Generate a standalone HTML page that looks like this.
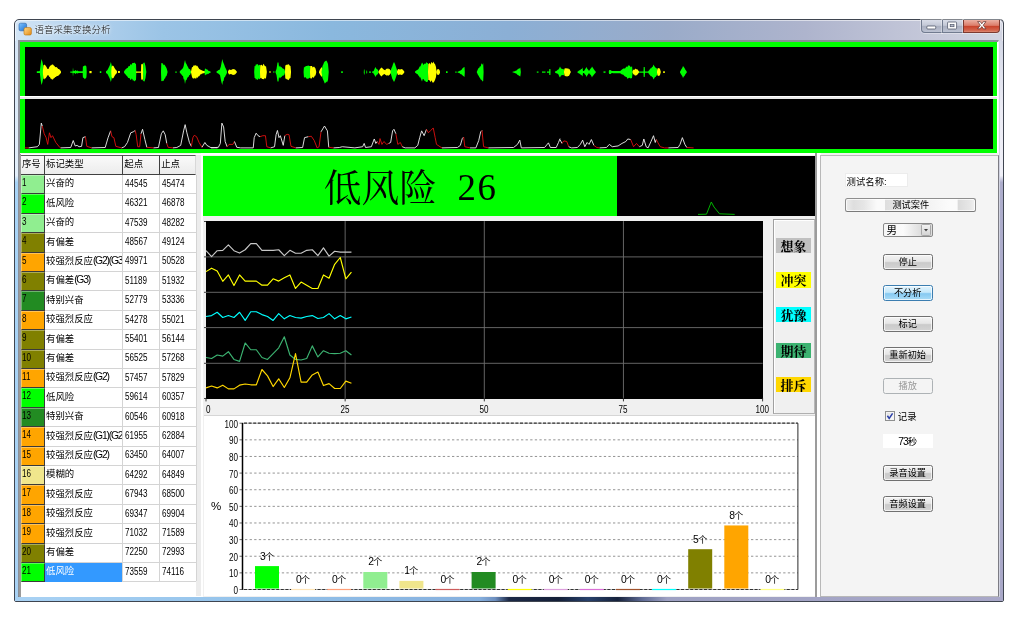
<!DOCTYPE html><html><head><meta charset="utf-8"><title>语音采集变换分析</title><style>
html,body{margin:0;padding:0;}
body{width:1033px;height:623px;background:#fff;position:relative;overflow:hidden;
 font-family:"Liberation Sans","Noto Sans CJK SC",sans-serif;font-size:9px;color:#000;}
div,span{box-sizing:border-box;}
.abs{position:absolute;}
#win{position:absolute;left:14.4px;top:19.1px;width:989.8px;height:582.7px;border:1px solid #3f4550;border-radius:5px 4px 2px 2px;
 background:linear-gradient(to right,#d3e5f6 0%,#b5d3ee 6%,#9bc4e6 15%,#8ab8de 32%,#8bafd5 50%,#9aabc9 66%,#aeb4cd 80%,#c6c9da 93%,#d2d4e2 100%);overflow:hidden;}
#winhl{position:absolute;left:0;top:0;right:0;bottom:0;border:1px solid rgba(255,255,255,.55);border-radius:5px 5px 1px 1px;}
#botframe{position:absolute;left:0px;top:577px;width:988px;height:5px;background:linear-gradient(to right,#a9d2f4 0%,#93c2ea 25%,#86b0de 47%,#6d8fbf 48.6%,#1c2946 50%,#141f38 55%,#27406b 58%,#16223c 61%,#5f6b95 63.5%,#9ea1c3 66%,#a9a8c8 100%);}
#leftframe{position:absolute;left:0;top:21px;width:4px;height:561px;background:linear-gradient(to bottom,#d6e6f6 0%,#e4f0fb 24%,#a8d4f7 25.2%,#a9d2f4 100%);}
#rightframe{position:absolute;left:984.6px;top:21px;width:5px;height:561px;background:linear-gradient(to bottom,#d4d8e6 0%,#ececf5 12%,#f0f0f8 24%,#adadcc 25.2%,#a9a8c8 100%);}
#title{position:absolute;left:34.4px;top:24.4px;font-size:9.5px;line-height:12px;color:#111;font-weight:300;white-space:nowrap;text-shadow:0 0 3px #fff,0 0 5px #fff;}
#client{position:absolute;left:18.2px;top:40px;width:981.2px;height:557px;background:#f0f0f0;border:2px solid #8a8f99;border-right:1.6px solid #f4f4f8;border-bottom:1.4px solid #666a74;}
.cap{position:absolute;top:20px;height:13.4px;border:1px solid #717b8f;border-top:none;box-shadow:0 0 0 1px rgba(255,255,255,.35);}


.t{position:absolute;white-space:nowrap;line-height:11px;font-size:9.4px;}
.n,.nr,.nc{font-size:10.3px;transform:scaleX(.786);transform-origin:left center;}
.nr{transform-origin:right center;}
.nc{transform-origin:center center;}
.ns{font-size:10.3px;letter-spacing:-0.95px;}
.nl{font-size:10.3px;letter-spacing:-1.2px;}
.hd{position:absolute;top:154.8px;height:20.2px;background:linear-gradient(#fafafa,#ececec);border-right:1px solid #404040;border-bottom:1px solid #404040;border-top:1px solid #5a5a5a;}
.rh{position:absolute;left:21px;width:24px;border-right:1.2px solid #3a3a3a;border-bottom:1.2px solid #3a3a3a;border-top:1px solid rgba(255,255,255,.35);border-left:1px solid rgba(255,255,255,.35);}
.btn{position:absolute;left:882.6px;width:50.2px;height:16.2px;border:1px solid #707070;border-radius:2.5px;
 background:linear-gradient(#f3f3f3 0%,#e6e6e6 45%,#cacaca 55%,#d4d4d4 100%);box-shadow:inset 0 0 0 1px rgba(255,255,255,.7);
 text-align:center;font-size:9.2px;line-height:14px;white-space:nowrap;}
.lg{position:absolute;left:776.2px;width:34.8px;height:15.2px;text-align:center;font-family:"Liberation Serif","Noto Serif CJK SC",serif;font-weight:bold;font-size:13px;line-height:18px;white-space:nowrap;}
</style></head><body><div id="root" style="position:absolute;left:0;top:0;width:1033px;height:623px;will-change:transform;">
<div id="win"><div id="winhl"></div><div id="leftframe"></div><div id="rightframe"></div><div id="botframe"></div></div>
<svg class="abs" style="left:18px;top:22px" width="15" height="15" viewBox="0 0 15 15"><defs><linearGradient id="ib" x1="0" y1="0" x2="1" y2="1"><stop offset="0" stop-color="#7fc4ff"/><stop offset="1" stop-color="#1d6fd0"/></linearGradient><linearGradient id="io" x1="0" y1="0" x2="1" y2="1"><stop offset="0" stop-color="#ffd98a"/><stop offset="1" stop-color="#e38a12"/></linearGradient></defs><rect x="1" y="1.2" width="7.6" height="7.6" rx="1.6" fill="url(#ib)" stroke="#2a62a8" stroke-width=".6"/><rect x="6" y="5.6" width="7.4" height="7.4" rx="1.6" fill="url(#io)" stroke="#b8700c" stroke-width=".6"/></svg>
<div id="title">语音采集变换分析</div>
<div class="cap" style="left:920.5px;width:21px;border-radius:0 0 0 4px;border-right:none;background:linear-gradient(#d9dde8 0%,#c3c8d6 45%,#a9afc0 50%,#bcc2d2 100%);"></div>
<div class="cap" style="left:941.5px;width:21px;border-right:none;background:linear-gradient(#d9dde8 0%,#c3c8d6 45%,#a9afc0 50%,#bcc2d2 100%);"></div>
<div class="cap" style="left:962.5px;width:37px;border-radius:0 0 4px 0;border-color:#7d3a30;background:linear-gradient(#ebb0a3 0%,#dc7d6a 45%,#c8432b 52%,#d3634c 85%,#dd8a74 100%);"></div>
<svg class="abs" style="left:920px;top:18.1px" width="80" height="15" viewBox="0 0 80 15"><rect x="6.8" y="8" width="9" height="3" rx="1" fill="#fff" stroke="#50586a" stroke-width=".8"/><rect x="27.6" y="4" width="9" height="7" rx=".8" fill="#fff" stroke="#50586a" stroke-width=".8"/><rect x="30.2" y="6.5" width="3.8" height="2.2" fill="#b8bdcc" stroke="#50586a" stroke-width=".7"/><path d="M57.6 3.6 L60.2 3.6 L61.8 5.8 L63.4 3.6 L66 3.6 L63.2 7.2 L66 10.8 L63.4 10.8 L61.8 8.6 L60.2 10.8 L57.6 10.8 L60.4 7.2 Z" fill="#fff" stroke="#5a2a26" stroke-width=".7"/></svg>
<div id="client"></div>
<div class="abs" style="left:20px;top:42px;width:977px;height:54.2px;background:#00ff00;"></div>
<div class="abs" style="left:20px;top:98.8px;width:977px;height:54.4px;background:#00ff00;"></div>
<div class="abs" style="left:19.5px;top:96.1px;width:978.5px;height:2.8px;background:#e8e8e8;border-top:1px solid #fff;"></div>
<div class="abs" style="left:24.8px;top:46.8px;width:968.2px;height:49.4px;background:#000;"></div>
<div class="abs" style="left:24.8px;top:98.9px;width:968.2px;height:50.1px;background:#000;"></div>
<div class="abs" style="left:997px;top:42px;width:1.4px;height:111px;background:#fff;"></div>
<svg class="abs" style="left:0;top:0" width="1033" height="160" viewBox="0 0 1033 160">
<polygon fill="#00ff00" points="36.8,71.3 37.55,71.25 38.3,71.2 39.05,71.15 39.8,71.1 40.2,68.1 40.8,63.1 41.5,59.1 42.2,61.1 42.8,63.6 43.4,67.1 44,71.6 44,72.6 43.4,77.1 42.8,80.6 42.2,83.1 41.5,85.1 40.8,81.1 40.2,76.1 39.8,73.1 39.05,73.05 38.3,73 37.55,72.95 36.8,72.9"/>
<polygon fill="#ffff00" points="42.9,71.1 43.4,65.6 44.3,64.6 44.9,65.01 45.5,65.6 46.5,67.1 47.5,68.9 48.5,68.9 49.3,67.1 49.9,66.24 50.5,65.6 51.25,65.36 52,64.6 53,64.6 53.75,65.39 54.5,66.1 55.25,67.32 56,67.1 56.75,67.27 57.5,68.1 58.25,69.01 59,69.1 60,70.1 61,71.4 61,72.8 60,74.1 59,75.1 58.25,75.63 57.5,76.1 56.75,75.88 56,77.1 55.25,77.11 54.5,78.1 53.75,78.24 53,79.6 52,79.6 51.25,78.77 50.5,78.6 49.9,76.79 49.3,77.1 48.5,75.3 47.5,75.3 46.5,77.1 45.5,78.6 44.9,78.31 44.3,79.6 43.4,78.6 42.9,73.1"/>
<polygon fill="#00ff00" points="70.3,71.4 71.07,71.4 71.83,71.4 72.6,71.4 73,67.6 73.5,71.1 74.5,71.1 75.5,70.1 76.5,71.1 77.5,70.6 78.5,71.3 79.2,71.3 79.9,71.3 80.6,71.3 81.3,71.3 82,71.3 82.7,71.3 82.9,66.6 84,66.1 84.75,65.47 85.5,65.6 86.4,66.6 86.7,71.6 86.7,72.6 86.4,77.6 85.5,78.6 84.75,79.18 84,78.1 82.9,77.6 82.7,72.9 82,72.9 81.3,72.9 80.6,72.9 79.9,72.9 79.2,72.9 78.5,72.9 77.5,73.6 76.5,73.1 75.5,74.1 74.5,73.1 73.5,73.1 73,76.6 72.6,72.8 71.83,72.8 71.07,72.8 70.3,72.8"/>
<polygon fill="#ffff00" points="89.4,71 91.6,71 91.6,73.2 89.4,73.2"/>
<polygon fill="#00ff00" points="99.8,71.2 101.3,71.2 101.3,73 99.8,73"/>
<polygon fill="#00ff00" points="106,71.3 106.75,70.7 107.5,70.1 108.5,68.1 109.5,66.1 110.3,64.1 110.8,62.1 111.4,64.1 112,67.1 112.6,71.6 112.6,72.6 112,77.1 111.4,80.1 110.8,82.1 110.3,80.1 109.5,78.1 108.5,76.1 107.5,74.1 106.75,73.5 106,72.9"/>
<polygon fill="#ffff00" points="111.3,71.6 111.6,67.1 112.5,65.6 113.5,66.1 114.5,68.1 115.5,69.6 116.5,70.6 117,71.6 117,72.6 116.5,73.6 115.5,74.6 114.5,76.1 113.5,78.1 112.5,78.6 111.6,77.1 111.3,72.6"/>
<polygon fill="#ffff00" points="118,71.1 119.9,71.1 119.9,73.1 118,73.1"/>
<polygon fill="#00ff00" points="124,71.6 125,70.1 125.67,69.26 126.33,68.86 127,68.1 127.67,68.05 128.33,66.58 129,66.1 129.67,66.13 130.33,64.53 131,64.1 131.67,65.11 132.33,62.93 133,63.1 133.75,62.93 134.5,62.6 135.25,63.55 136,64.1 136.3,71.4 136.3,72.8 136,80.1 135.25,80.52 134.5,81.6 133.75,80.1 133,81.1 132.33,78.96 131.67,78.62 131,80.1 130.33,79.75 129.67,78.35 129,78.1 128.33,78.12 127.67,76.91 127,76.1 126.33,75.44 125.67,74.62 125,74.1 124,72.6"/>
<polygon fill="#ffff00" points="136,71.4 136.71,71.4 137.43,71.4 138.14,71.4 138.86,71.4 139.57,71.4 140.29,71.4 141,71.4 141.2,64.1 142.1,64.51 143,63.6 143.2,71.6 143.2,72.6 143,80.6 142.1,79.05 141.2,80.1 141,72.8 140.29,72.8 139.57,72.8 138.86,72.8 138.14,72.8 137.43,72.8 136.71,72.8 136,72.8"/>
<polygon fill="#00ff00" points="143,71.6 143.2,63.1 144.5,62.6 145.5,66.1 146,70.1 146.3,71.6 146.3,72.6 146,74.1 145.5,78.1 144.5,81.6 143.2,81.1 143,72.6"/>
<polygon fill="#00ff00" points="161,71.6 161.3,63.1 162.15,63.27 163,63.6 163.67,65.16 164.33,64.38 165,65.6 165.75,66.69 166.5,68.1 167.5,71.6 167.5,72.6 166.5,76.1 165.75,76.42 165,78.6 164.33,78.67 163.67,80.92 163,80.6 162.15,81.15 161.3,81.1 161,72.6"/>
<polygon fill="#00ff00" points="175.3,71.4 176.7,71.4 176.7,72.8 175.3,72.8"/>
<polygon fill="#00ff00" points="179.7,71.6 180.35,70.85 181,70.1 181.67,69.45 182.33,68.67 183,68.1 183.67,65.97 184.33,62.77 185,60.1 185.75,62.98 186.5,64.1 187.25,65.74 188,67.1 188.67,68.5 189.33,69.16 190,69.1 191,71.6 191,72.6 190,75.1 189.33,75.06 188.67,76.72 188,77.1 187.25,78.02 186.5,80.1 185.75,80.26 185,84.1 184.33,79.4 183.67,79.28 183,76.1 182.33,75.77 181.67,74.7 181,74.1 180.35,73.35 179.7,72.6"/>
<polygon fill="#ffff00" points="191,71.6 192,67.1 192.67,67.3 193.33,65.93 194,65.1 194.67,65.71 195.33,65.52 196,65.1 196.67,66.32 197.33,65.77 198,67.1 198.67,68.06 199.33,69.22 200,69.1 200.67,70.01 201.33,70.01 202,70.6 202.75,70.77 203.5,70.95 204.25,71.12 205,71.3 205.2,71.6 205.2,72.6 205,72.9 204.25,73.07 203.5,73.25 202.75,73.42 202,73.6 201.33,74.17 200.67,74.36 200,75.1 199.33,76.22 198.67,76.35 198,77.1 197.33,78.12 196.67,77.3 196,79.1 195.33,78.31 194.67,77.79 194,79.1 193.33,78.13 192.67,78.33 192,77.1 191,72.6"/>
<polygon fill="#00ff00" points="204.5,71.5 205,68.6 205.67,68.69 206.33,69.19 207,69.6 207.67,69.76 208.33,70.74 209,70.9 209.85,71.3 210.7,71.7 210.7,72.5 209.85,72.9 209,73.3 208.33,73.95 207.67,73.73 207,74.6 206.33,74.35 205.67,74.77 205,75.6 204.5,72.7"/>
<polygon fill="#00ff00" points="216.5,71.6 217.25,71.1 218,70.6 218.67,70.06 219.33,69.94 220,69.1 220.77,66.82 221.53,63.06 222.3,59.1 222.9,61.58 223.5,63.1 224.25,64.69 225,67.1 225.75,68.38 226.5,70.1 227,71.6 227,72.6 226.5,74.1 225.75,75.19 225,77.1 224.25,77.55 223.5,81.1 222.9,81.29 222.3,85.1 221.53,82.61 220.77,79.09 220,75.1 219.33,74.62 218.67,73.68 218,73.6 217.25,73.1 216.5,72.6"/>
<polygon fill="#ffff00" points="228,71.6 229,69.6 231,70.1 233,69.1 235,69.6 236.8,71.6 236.8,72.6 235,74.6 233,75.1 231,74.1 229,74.6 228,72.6"/>
<polygon fill="#00ff00" points="254.2,71.6 254.6,66.1 255.3,66.34 256,64.1 256.67,64.75 257.33,64.1 258,64.6 258.67,65.66 259.33,64.8 260,65.1 260.2,71.6 260.2,72.6 260,79.1 259.33,79.21 258.67,78.35 258,79.6 257.33,80.03 256.67,78.87 256,80.1 255.3,78.09 254.6,78.1 254.2,72.6"/>
<polygon fill="#ffff00" points="260,71.6 260.2,65.6 261.1,64.72 262,65.1 262.67,66.19 263.33,63.8 264,64.6 264.67,65.71 265.33,66.38 266,66.1 266.8,71.6 266.8,72.6 266,78.1 265.33,78.85 264.67,77.69 264,79.6 263.33,78.94 262.67,79.11 262,79.1 261.1,77.86 260.2,78.6 260,72.6"/>
<polygon fill="#ffff00" points="269,71.6 271,71.6 271,72.6 269,72.6"/>
<polygon fill="#00ff00" points="273,71.6 274.5,71.6 274.5,72.6 273,72.6"/>
<polygon fill="#00ff00" points="275.5,71.6 276.5,69.1 277.5,62.6 278.5,62.6 279,67.1 280,65.6 280.75,67.17 281.5,67.1 282.25,68.15 283,68.6 283.75,68.92 284.5,69.6 285,71.6 285,72.6 284.5,74.6 283.75,75.42 283,75.6 282.25,75.98 281.5,77.1 280.75,77.29 280,78.6 279,77.1 278.5,81.6 277.5,81.6 276.5,75.1 275.5,72.6"/>
<polygon fill="#ffff00" points="285,71.6 285.3,65.6 286.15,65.07 287,64.6 287.67,64.73 288.33,64.25 289,64.6 289.75,65.87 290.5,66.1 291,71.6 291,72.6 290.5,78.1 289.75,78.2 289,79.6 288.33,80.36 287.67,79.61 287,79.6 286.15,78.74 285.3,78.6 285,72.6"/>
<polygon fill="#00ff00" points="303.6,71.6 304,66.6 304.67,67.6 305.33,66.61 306,66.1 306.8,66.02 307.6,65.73 308.4,65.45 309.2,66.01 310,66.1 310.2,71.6 310.2,72.6 310,78.1 309.2,77.84 308.4,78.77 307.6,78.81 306.8,78.75 306,78.1 305.33,76.99 304.67,77.39 304,77.6 303.6,72.6"/>
<polygon fill="#ffff00" points="310,71.6 310.2,66.1 311.1,66.08 312,66.1 312.67,67.45 313.33,67.05 314,66.6 314.75,67.55 315.5,68.6 316.2,71.6 316.2,72.6 315.5,75.6 314.75,75.79 314,77.6 313.33,77.75 312.67,76.69 312,78.1 311.1,78.86 310.2,78.1 310,72.6"/>
<polygon fill="#ffff00" points="319,71.6 320,69.6 321,68.1 322,67.1 322.3,71.6 322.3,72.6 322,77.1 321,76.1 320,74.6 319,72.6"/>
<polygon fill="#00ff00" points="321.5,71.6 322.5,66.1 323.25,64.41 324,62.6 324.75,61.5 325.5,61.1 326.25,60.56 327,61.6 328,64.1 328.7,71.6 328.7,72.6 328,80.1 327,82.6 326.25,81.54 325.5,83.1 324.75,83.4 324,81.6 323.25,79.75 322.5,78.1 321.5,72.6"/>
<polygon fill="#00ff00" points="341.2,71.3 342.8,71.3 342.8,72.9 341.2,72.9"/>
<polygon fill="#00ff00" points="363.8,71.8 364,69.6 364.5,69.6 364.7,71.8 364.7,72.4 364.5,74.6 364,74.6 363.8,72.4"/>
<polygon fill="#00ff00" points="366.3,71.8 366.5,70.6 367,70.6 367.2,71.8 367.2,72.4 367,73.6 366.5,73.6 366.3,72.4"/>
<polygon fill="#00ff00" points="369,71.5 371,71.5 371,72.7 369,72.7"/>
<polygon fill="#00ff00" points="372,71.5 373,71.5 373,72.7 372,72.7"/>
<polygon fill="#00ff00" points="373,71.6 373.75,70.67 374.5,69.1 375.5,67.1 376.5,69.1 377.25,69.33 378,70.1 378.5,71.6 378.5,72.6 378,74.1 377.25,74.57 376.5,75.1 375.5,77.1 374.5,75.1 373.75,73.93 373,72.6"/>
<polygon fill="#ffff00" points="378.5,71.6 379.25,70.17 380,69.1 380.75,68.18 381.5,67.6 382.25,68.05 383,69.1 383.75,69.44 384.5,70.1 385.25,70.15 386,69.1 386.67,68.7 387.33,69.11 388,68.1 388.75,69.34 389.5,69.1 390.25,70.09 391,71.1 391.2,71.6 391.2,72.6 391,73.1 390.25,73.71 389.5,75.1 388.75,75.16 388,76.1 387.33,75.02 386.67,75.66 386,75.1 385.25,74.85 384.5,74.1 383.75,74.26 383,75.1 382.25,75.47 381.5,76.6 380.75,75.86 380,75.1 379.25,73.47 378.5,72.6"/>
<polygon fill="#00ff00" points="390.5,71.6 391.5,68.1 392.25,66.45 393,64.1 394,62.1 395,64.1 396,67.1 397,70.1 397.3,71.6 397.3,72.6 397,74.1 396,77.1 395,80.1 394,82.1 393,80.1 392.25,78.73 391.5,76.1 390.5,72.6"/>
<polygon fill="#ffff00" points="397,71.6 398,69.1 400,69.6 402,69.1 403.5,70.6 404.3,71.6 404.3,72.6 403.5,73.6 402,75.1 400,74.6 398,75.1 397,72.6"/>
<polygon fill="#00ff00" points="415,71.6 415.67,71.1 416.33,70.6 417,70.1 417.67,69.78 418.33,69.36 419,68.1 419.67,66.55 420.33,66.41 421,65.1 422,62.6 422.75,63.43 423.5,65.1 424.25,63.71 425,63.6 425.75,63.67 426.5,62.1 427.25,63.36 428,63.1 428.3,71.6 428.3,72.6 428,81.1 427.25,82.12 426.5,82.1 425.75,81.74 425,80.6 424.25,80.83 423.5,79.1 422.75,78.96 422,81.6 421,79.1 420.33,77.37 419.67,77.47 419,76.1 418.33,75.61 417.67,74.22 417,74.1 416.33,73.6 415.67,73.1 415,72.6"/>
<polygon fill="#ffff00" points="428,71.6 428.3,64.1 429.15,63.41 430,63.1 430.67,64.67 431.33,61.99 432,62.6 432.75,63.54 433.5,61.6 434.25,63.56 435,64.1 436,67.1 436.5,71.6 436.5,72.6 436,77.1 435,80.1 434.25,81.39 433.5,82.6 432.75,82.73 432,81.6 431.33,80.28 430.67,82.21 430,81.1 429.15,80.02 428.3,80.1 428,72.6"/>
<polygon fill="#ffff00" points="436.3,71.6 437,69.6 438.5,69.1 439.5,70.1 440,71.6 440,72.6 439.5,74.1 438.5,75.1 437,74.6 436.3,72.6"/>
<polygon fill="#00ff00" points="446,71.3 447.6,71.3 447.6,72.9 446,72.9"/>
<polygon fill="#00ff00" points="455.3,71.5 456.6,71.5 456.6,72.7 455.3,72.7"/>
<polygon fill="#00ff00" points="457.5,71.7 458.25,71.5 459,71.3 459.67,70.83 460.33,70.67 461,69.9 461.67,69.79 462.33,68.57 463,68.1 463.75,67.21 464.5,67.1 464.8,71.7 464.8,72.5 464.5,77.1 463.75,76.37 463,76.1 462.33,75.12 461.67,74.38 461,74.3 460.33,74.03 459.67,73.37 459,72.9 458.25,72.7 457.5,72.5"/>
<polygon fill="#00ff00" points="476.8,71.7 477.4,70.6 478,69.1 478.67,67.95 479.33,67.64 480,66.1 480.67,66.75 481.33,63.65 482,63.6 482.6,64.9 483.2,63.1 483.6,71.7 483.6,72.5 483.2,81.1 482.6,81.38 482,80.6 481.33,79.77 480.67,79.53 480,78.1 479.33,77.17 478.67,75.74 478,75.1 477.4,73.51 476.8,72.5"/>
<polygon fill="#00ff00" points="512.6,71.7 513.3,71.6 514,71.5 514.67,71.2 515.33,70.9 516,70.6 516.67,70.46 517.33,69.54 518,69.3 518.77,68.59 519.53,68.47 520.3,67.6 520.8,71.7 520.8,72.5 520.3,76.6 519.53,76.09 518.77,75.45 518,74.9 517.33,74.7 516.67,73.8 516,73.6 515.33,73.3 514.67,73 514,72.7 513.3,72.6 512.6,72.5"/>
<polygon fill="#00ff00" points="536.8,71.5 538.5,71.5 538.5,72.7 536.8,72.7"/>
<polygon fill="#00ff00" points="542,71.5 545.5,71.5 545.5,72.7 542,72.7"/>
<polygon fill="#00ff00" points="547,71.5 549.2,71.5 549.3,69.1 550.4,69.1 550.5,71.7 550.5,72.5 550.4,75.1 549.3,75.1 549.2,72.7 547,72.7"/>
<polygon fill="#00ff00" points="555,71.6 555.67,71.27 556.33,70.93 557,70.6 557.75,69.86 558.5,69.6 559.25,68.17 560,66.6 561,68.6 561.75,68.69 562.5,69.1 563.25,69.57 564,69.1 564.2,71.6 564.2,72.6 564,75.1 563.25,75.22 562.5,75.1 561.75,75.24 561,75.6 560,77.6 559.25,76.43 558.5,74.6 557.75,73.86 557,73.6 556.33,73.27 555.67,72.93 555,72.6"/>
<polygon fill="#ffff00" points="564,71.6 564.5,68.6 565.25,68.5 566,68.1 566.67,68.45 567.33,68.64 568,68.1 568.75,69.36 569.5,69.1 570.1,70.46 570.7,71.6 570.7,72.6 570.1,73.5 569.5,75.1 568.75,76.04 568,76.1 567.33,76.5 566.67,76.59 566,76.1 565.25,76.32 564.5,75.6 564,72.6"/>
<polygon fill="#00ff00" points="577.4,71.7 578.2,71.15 579,70.6 579.67,70.24 580.33,69.88 581,69.1 581.75,69.06 582.5,67.6 583,71.1 584,71.1 585,69.6 585.75,68.24 586.5,67.1 587.25,68.8 588,69.6 589,71.1 590,69.6 590.67,68.38 591.33,68.02 592,66.6 592.67,67.57 593.33,68.49 594,69.6 594.9,70.65 595.8,71.7 595.8,72.5 594.9,73.55 594,74.6 593.33,75.51 592.67,75.9 592,77.6 591.33,76.11 590.67,74.83 590,74.6 589,73.1 588,74.6 587.25,75.55 586.5,77.1 585.75,75.08 585,74.6 584,73.1 583,73.1 582.5,76.6 581.75,75.2 581,75.1 580.33,74.13 579.67,73.73 579,73.6 578.2,73.05 577.4,72.5"/>
<polygon fill="#00ff00" points="603.5,71.4 605.5,71.4 605.5,72.8 603.5,72.8"/>
<polygon fill="#00ff00" points="608.8,71.6 609.2,70.1 610.1,70.17 611,70.1 611.5,71.1 612.27,71.08 613.05,71.06 613.82,71.05 614.59,71.03 615.36,71.01 616.14,70.99 616.91,70.97 617.68,70.95 618.45,70.94 619.23,70.92 620,70.9 620.67,70.83 621.33,70.11 622,69.6 622.67,69.06 623.33,68.56 624,68.6 624.67,68.59 625.33,68.16 626,67.1 626.67,66.52 627.33,67.17 628,65.6 628.67,65.4 629.33,65.57 630,66.1 630.67,67.28 631.33,67.09 632,66.1 632.6,71.6 632.6,72.6 632,78.1 631.33,78.37 630.67,78.49 630,78.1 629.33,77.85 628.67,78.12 628,78.6 627.33,78.71 626.67,77.04 626,77.1 625.33,76.57 624.67,76.3 624,75.6 623.33,74.75 622.67,74.56 622,74.6 621.33,74.08 620.67,73.54 620,73.3 619.23,73.28 618.45,73.26 617.68,73.25 616.91,73.23 616.14,73.21 615.36,73.19 614.59,73.17 613.82,73.15 613.05,73.14 612.27,73.12 611.5,73.1 611,74.1 610.1,74.07 609.2,74.1 608.8,72.6"/>
<polygon fill="#ffff00" points="632.5,71.6 633.5,69.6 634.17,69.88 634.83,69.22 635.5,68.6 636.17,69.6 636.83,68.95 637.5,69.6 638.25,70.6 639,71.6 639,72.6 638.25,73.6 637.5,74.6 636.83,74.89 636.17,75.45 635.5,75.6 634.83,75.5 634.17,74.57 633.5,74.6 632.5,72.6"/>
<polygon fill="#00ff00" points="639,71.4 639.75,71.4 640.5,71.4 641.25,71.4 642,71.4 642.75,71.4 643.5,71.4 643.7,67.1 644.7,67.1 645,71.4 645.75,71.4 646.5,71.4 647.25,71.4 648,71.4 648,72.8 647.25,72.8 646.5,72.8 645.75,72.8 645,72.8 644.7,77.1 643.7,77.1 643.5,72.8 642.75,72.8 642,72.8 641.25,72.8 640.5,72.8 639.75,72.8 639,72.8"/>
<polygon fill="#00ff00" points="648,71.6 648.67,70.77 649.33,70.1 650,69.1 650.67,68.2 651.33,68.26 652,67.1 652.75,66.75 653.5,64.6 654.25,65.88 655,67.1 655.67,67.66 656.33,68.32 657,68.6 657.5,71.6 657.5,72.6 657,75.6 656.33,75.52 655.67,76.99 655,77.1 654.25,78.31 653.5,79.6 652.75,77.15 652,77.1 651.33,76.03 650.67,76.27 650,75.1 649.33,74.44 648.67,73.43 648,72.6"/>
<polygon fill="#ffff00" points="657,71.6 657.5,68.6 659,68.1 660,69.1 660.7,71.6 660.7,72.6 660,75.1 659,76.1 657.5,75.6 657,72.6"/>
<polygon fill="#ffff00" points="663.2,71.3 664.8,71.3 664.8,72.9 663.2,72.9"/>
<polygon fill="#00ff00" points="680,71.7 680.75,70.62 681.5,69.1 682.25,68.11 683,66.1 683.75,66.99 684.5,68.1 685.25,69.61 686,70.6 686.8,71.7 686.8,72.5 686,73.6 685.25,74.45 684.5,76.1 683.75,76.44 683,78.1 682.25,75.98 681.5,75.1 680.75,73.75 680,72.5"/>
<polyline fill="none" stroke="#e01010" stroke-width="0.9" stroke-linejoin="round" points="24.84,147.89 28.71,147.89"/>
<polyline fill="none" stroke="#f0f0f0" stroke-width="0.9" stroke-linejoin="round" points="28.71,147.89 37.42,146.73 39.36,144.4 41.3,123.11 42.27,126.01"/>
<polyline fill="none" stroke="#e01010" stroke-width="0.9" stroke-linejoin="round" points="42.27,126.01 44.2,133.75 46.14,137.63 47.69,144.4 49.43,132.79 50.98,137.63 52.53,135.69 55.82,142.47 59.69,147.31 60.66,147.89"/>
<polyline fill="none" stroke="#f0f0f0" stroke-width="0.9" stroke-linejoin="round" points="60.66,147.89 70.73,147.5 73.24,140.53 75.18,145.95 77.12,145.37 79.05,146.73 81.57,146.34 82.92,137.63 85.44,136.66"/>
<polyline fill="none" stroke="#e01010" stroke-width="0.9" stroke-linejoin="round" points="85.44,136.66 86.8,146.34 91.64,147.89"/>
<polyline fill="none" stroke="#f0f0f0" stroke-width="0.9" stroke-linejoin="round" points="91.64,147.89 105.19,147.5 108.09,137.63 110.61,130.85"/>
<polyline fill="none" stroke="#e01010" stroke-width="0.9" stroke-linejoin="round" points="110.61,130.85 111.97,136.66 113.9,137.63 115.84,146.34 121.65,147.89"/>
<polyline fill="none" stroke="#f0f0f0" stroke-width="0.9" stroke-linejoin="round" points="121.65,147.89 124.55,146.73 127.45,142.47 130.75,132.79 133.26,131.82 135.2,130.46"/>
<polyline fill="none" stroke="#e01010" stroke-width="0.9" stroke-linejoin="round" points="135.2,130.46 136.17,134.72 137.72,146.73 139.65,146.73 141.01,133.75"/>
<polyline fill="none" stroke="#f0f0f0" stroke-width="0.9" stroke-linejoin="round" points="141.01,133.75 142.56,129.3 144.88,139.56 146.82,147.31"/>
<polyline fill="none" stroke="#e01010" stroke-width="0.9" stroke-linejoin="round" points="146.82,147.31 153.59,147.89"/>
<polyline fill="none" stroke="#f0f0f0" stroke-width="0.9" stroke-linejoin="round" points="153.59,147.89 158.43,147.5 161.34,133.75 163.27,130.85 165.21,134.72 166.76,143.43"/>
<polyline fill="none" stroke="#e01010" stroke-width="0.9" stroke-linejoin="round" points="166.76,143.43 168.11,147.31 172.95,147.89"/>
<polyline fill="none" stroke="#f0f0f0" stroke-width="0.9" stroke-linejoin="round" points="172.95,147.89 176.82,147.5 180.7,145.37 183.6,130.85 185.15,124.65 186.89,132.79 189.41,142.47 191.35,146.34"/>
<polyline fill="none" stroke="#e01010" stroke-width="0.9" stroke-linejoin="round" points="191.35,146.34 192.89,137.63 194.25,135.3 196.57,136.66 199.09,142.47 201.99,147.31"/>
<polyline fill="none" stroke="#f0f0f0" stroke-width="0.9" stroke-linejoin="round" points="201.99,147.31 204.9,142.47 206.83,145.37 210.71,147.5 217.48,147.89"/>
<polyline fill="none" stroke="#f0f0f0" stroke-width="0.9" stroke-linejoin="round" points="210.65,147.5 211.62,147.89 218.39,147.31 220.33,143.43 221.88,123.11 223.62,126.98 225.17,141.5 227.11,146.73"/>
<polyline fill="none" stroke="#e01010" stroke-width="0.9" stroke-linejoin="round" points="227.11,146.73 229.04,144.4 232.91,144.4 234.46,141.5"/>
<polyline fill="none" stroke="#f0f0f0" stroke-width="0.9" stroke-linejoin="round" points="234.46,141.5 236.79,147.31 240.66,147.89 253.24,147.89 254.21,137.63 256.15,133.17 258.08,135.69 260.02,136.66"/>
<polyline fill="none" stroke="#e01010" stroke-width="0.9" stroke-linejoin="round" points="260.02,136.66 262.92,135.69 265.44,135.69 266.8,146.73 270.67,147.89"/>
<polyline fill="none" stroke="#f0f0f0" stroke-width="0.9" stroke-linejoin="round" points="270.67,147.89 274.54,146.73 276.09,134.72 277.44,130.46 278.99,137.63 280.35,135.69 283.25,145.37 284.8,135.69"/>
<polyline fill="none" stroke="#e01010" stroke-width="0.9" stroke-linejoin="round" points="284.8,135.69 287.12,134.33 289.06,134.72 291,146.34 295.84,147.89"/>
<polyline fill="none" stroke="#f0f0f0" stroke-width="0.9" stroke-linejoin="round" points="295.84,147.89 302.61,147.5 304.55,137.63 308.42,136.66"/>
<polyline fill="none" stroke="#e01010" stroke-width="0.9" stroke-linejoin="round" points="308.42,136.66 311.33,136.27 314.23,140.53 317.13,147.89 319.07,146.73 321.01,131.82"/>
<polyline fill="none" stroke="#f0f0f0" stroke-width="0.9" stroke-linejoin="round" points="321.01,131.82 324.49,126.01 327.4,130.85 328.75,147.31"/>
<polyline fill="none" stroke="#e01010" stroke-width="0.9" stroke-linejoin="round" points="328.75,147.31 333.59,147.89"/>
<polyline fill="none" stroke="#f0f0f0" stroke-width="0.9" stroke-linejoin="round" points="333.59,147.89 339.4,147.5 342.3,146.73 354.89,147.89 362.63,146.73 364.18,143.43 365.54,147.5 371.35,146.73 374.25,138.98 375.8,143.43 377.15,141.5"/>
<polyline fill="none" stroke="#e01010" stroke-width="0.9" stroke-linejoin="round" points="377.1,141.5 379.03,144.4 380,138.59 381.94,144.4 383.87,141.5 386.78,144.4 388.71,143.43"/>
<polyline fill="none" stroke="#f0f0f0" stroke-width="0.9" stroke-linejoin="round" points="388.71,143.43 390.65,142.47 392.58,130.85 393.94,129.3 395.88,133.75"/>
<polyline fill="none" stroke="#e01010" stroke-width="0.9" stroke-linejoin="round" points="395.88,133.75 397.81,144.4 400.33,142.47 402.27,146.73"/>
<polyline fill="none" stroke="#f0f0f0" stroke-width="0.9" stroke-linejoin="round" points="402.27,146.73 405.17,147.89 414.85,147.89 417.75,145.37 419.69,137.63 421.63,130.85 424.14,135.69 426.47,129.3"/>
<polyline fill="none" stroke="#e01010" stroke-width="0.9" stroke-linejoin="round" points="426.47,129.3 428.4,132.79 430.73,130.46 433.24,127.95 435.18,137.63 436.53,144.4 440.02,146.73 441.96,147.89"/>
<polyline fill="none" stroke="#f0f0f0" stroke-width="0.9" stroke-linejoin="round" points="441.96,147.89 457.44,147.5 460.35,145.37 462.28,138.59 463.64,137.05"/>
<polyline fill="none" stroke="#e01010" stroke-width="0.9" stroke-linejoin="round" points="463.64,137.05 464.8,146.73 470.03,147.89"/>
<polyline fill="none" stroke="#f0f0f0" stroke-width="0.9" stroke-linejoin="round" points="470.03,147.89 475.84,147.89 478.74,140.53 480.68,131.82 482.03,130.46"/>
<polyline fill="none" stroke="#e01010" stroke-width="0.9" stroke-linejoin="round" points="482.03,130.46 483.58,146.73 488.42,147.89"/>
<polyline fill="none" stroke="#f0f0f0" stroke-width="0.9" stroke-linejoin="round" points="488.42,147.89 513.59,147.5 517.46,144.4 519.79,140.14 521.34,147.89 544.57,147.5 548.44,142.85 550.38,147.5 556.19,147.5 558.51,142.47 560.06,138.59"/>
<polyline fill="none" stroke="#f0f0f0" stroke-width="0.9" stroke-linejoin="round" points="560,139.56 561.94,143.43"/>
<polyline fill="none" stroke="#e01010" stroke-width="0.9" stroke-linejoin="round" points="561.94,143.43 563.87,140.92 566.78,141.5 568.71,146.73"/>
<polyline fill="none" stroke="#f0f0f0" stroke-width="0.9" stroke-linejoin="round" points="568.71,146.73 571.62,147.89 577.42,147.5 580.33,144.4 582.65,140.14 584.78,146.73 587.11,142.47 589.04,144.4 591.36,139.56 593.88,145.37"/>
<polyline fill="none" stroke="#e01010" stroke-width="0.9" stroke-linejoin="round" points="593.88,145.37 596.79,147.5 599.69,147.89"/>
<polyline fill="none" stroke="#f0f0f0" stroke-width="0.9" stroke-linejoin="round" points="599.69,147.89 606.47,147.5 609.37,144.4 612.27,146.73 618.08,145.95 621.96,143.43 625.83,141.5 627.76,138.98 630.67,139.56"/>
<polyline fill="none" stroke="#e01010" stroke-width="0.9" stroke-linejoin="round" points="630.67,139.56 633.57,146.73 636.48,143.43 639.38,146.73"/>
<polyline fill="none" stroke="#f0f0f0" stroke-width="0.9" stroke-linejoin="round" points="639.38,146.73 642.28,145.37 643.83,138.98 646.16,146.73 648.09,147.89 651,141.5 653.51,135.69 655.26,142.47 656.22,139.56"/>
<polyline fill="none" stroke="#e01010" stroke-width="0.9" stroke-linejoin="round" points="656.22,139.56 657.77,142.47 660.29,146.73 664.55,147.89 668.42,147.89"/>
<polyline fill="none" stroke="#f0f0f0" stroke-width="0.9" stroke-linejoin="round" points="668.42,147.89 678.1,147.5 680.04,144.4 682.36,137.63 684.88,144.4 686.82,147.5"/>
<polyline fill="none" stroke="#e01010" stroke-width="0.9" stroke-linejoin="round" points="686.82,147.5 693.59,147.89"/>
</svg>
<div class="abs" style="left:18.5px;top:154px;width:182px;height:443px;background:#fff;border-left:2px solid #9a9a9a;"></div>
<div class="abs" style="left:196px;top:155px;width:4.5px;height:441px;background:#ececec;"></div>
<div class="hd" style="left:20.8px;width:24.2px;"></div>
<div class="t" style="left:21.9px;top:157.6px;">序号</div>
<div class="hd" style="left:45px;width:78.2px;"></div>
<div class="t" style="left:46.1px;top:157.6px;">标记类型</div>
<div class="hd" style="left:123.2px;width:36.9px;"></div>
<div class="t" style="left:124.3px;top:157.6px;">起点</div>
<div class="hd" style="left:160.1px;width:36.2px;border-right-color:#d8d8d8;"></div>
<div class="t" style="left:161.2px;top:157.6px;">止点</div>
<div class="abs" style="left:45px;top:193.4px;width:151px;height:1px;background:#d4d4d4;"></div>
<div class="rh" style="top:175px;height:19.4px;background:#90ee90;"></div>
<div class="t n" style="left:22px;top:176.9px;">1</div>
<div class="t" style="left:46px;top:177.4px;width:76px;overflow:hidden;">兴奋的</div>
<div class="t n" style="left:124.6px;top:177.8px;">44545</div>
<div class="t n" style="left:161.6px;top:177.8px;">45474</div>
<div class="abs" style="left:45px;top:212.8px;width:151px;height:1px;background:#d4d4d4;"></div>
<div class="rh" style="top:194.4px;height:19.4px;background:#00ff00;"></div>
<div class="t n" style="left:22px;top:196.3px;">2</div>
<div class="t" style="left:46px;top:196.8px;width:76px;overflow:hidden;">低风险</div>
<div class="t n" style="left:124.6px;top:197.2px;">46321</div>
<div class="t n" style="left:161.6px;top:197.2px;">46878</div>
<div class="abs" style="left:45px;top:232.2px;width:151px;height:1px;background:#d4d4d4;"></div>
<div class="rh" style="top:213.8px;height:19.4px;background:#90ee90;"></div>
<div class="t n" style="left:22px;top:215.7px;">3</div>
<div class="t" style="left:46px;top:216.2px;width:76px;overflow:hidden;">兴奋的</div>
<div class="t n" style="left:124.6px;top:216.6px;">47539</div>
<div class="t n" style="left:161.6px;top:216.6px;">48282</div>
<div class="abs" style="left:45px;top:251.6px;width:151px;height:1px;background:#d4d4d4;"></div>
<div class="rh" style="top:233.2px;height:19.4px;background:#808000;"></div>
<div class="t n" style="left:22px;top:235.1px;">4</div>
<div class="t" style="left:46px;top:235.6px;width:76px;overflow:hidden;">有偏差</div>
<div class="t n" style="left:124.6px;top:236px;">48567</div>
<div class="t n" style="left:161.6px;top:236px;">49124</div>
<div class="abs" style="left:45px;top:271px;width:151px;height:1px;background:#d4d4d4;"></div>
<div class="rh" style="top:252.6px;height:19.4px;background:#ffa500;"></div>
<div class="t n" style="left:22px;top:254.5px;">5</div>
<div class="t" style="left:46px;top:255px;width:76px;overflow:hidden;">较强烈反应<span class="nl">(G2)(G3</span></div>
<div class="t n" style="left:124.6px;top:255.4px;">49971</div>
<div class="t n" style="left:161.6px;top:255.4px;">50528</div>
<div class="abs" style="left:45px;top:290.4px;width:151px;height:1px;background:#d4d4d4;"></div>
<div class="rh" style="top:272px;height:19.4px;background:#808000;"></div>
<div class="t n" style="left:22px;top:273.9px;">6</div>
<div class="t" style="left:46px;top:274.4px;width:76px;overflow:hidden;">有偏差<span class="nl">(G3)</span></div>
<div class="t n" style="left:124.6px;top:274.8px;">51189</div>
<div class="t n" style="left:161.6px;top:274.8px;">51932</div>
<div class="abs" style="left:45px;top:309.8px;width:151px;height:1px;background:#d4d4d4;"></div>
<div class="rh" style="top:291.4px;height:19.4px;background:#228b22;"></div>
<div class="t n" style="left:22px;top:293.3px;">7</div>
<div class="t" style="left:46px;top:293.8px;width:76px;overflow:hidden;">特别兴奋</div>
<div class="t n" style="left:124.6px;top:294.2px;">52779</div>
<div class="t n" style="left:161.6px;top:294.2px;">53336</div>
<div class="abs" style="left:45px;top:329.2px;width:151px;height:1px;background:#d4d4d4;"></div>
<div class="rh" style="top:310.8px;height:19.4px;background:#ffa500;"></div>
<div class="t n" style="left:22px;top:312.7px;">8</div>
<div class="t" style="left:46px;top:313.2px;width:76px;overflow:hidden;">较强烈反应</div>
<div class="t n" style="left:124.6px;top:313.6px;">54278</div>
<div class="t n" style="left:161.6px;top:313.6px;">55021</div>
<div class="abs" style="left:45px;top:348.6px;width:151px;height:1px;background:#d4d4d4;"></div>
<div class="rh" style="top:330.2px;height:19.4px;background:#808000;"></div>
<div class="t n" style="left:22px;top:332.1px;">9</div>
<div class="t" style="left:46px;top:332.6px;width:76px;overflow:hidden;">有偏差</div>
<div class="t n" style="left:124.6px;top:333px;">55401</div>
<div class="t n" style="left:161.6px;top:333px;">56144</div>
<div class="abs" style="left:45px;top:368px;width:151px;height:1px;background:#d4d4d4;"></div>
<div class="rh" style="top:349.6px;height:19.4px;background:#808000;"></div>
<div class="t n" style="left:22px;top:351.5px;">10</div>
<div class="t" style="left:46px;top:352px;width:76px;overflow:hidden;">有偏差</div>
<div class="t n" style="left:124.6px;top:352.4px;">56525</div>
<div class="t n" style="left:161.6px;top:352.4px;">57268</div>
<div class="abs" style="left:45px;top:387.4px;width:151px;height:1px;background:#d4d4d4;"></div>
<div class="rh" style="top:369px;height:19.4px;background:#ffa500;"></div>
<div class="t n" style="left:22px;top:370.9px;">11</div>
<div class="t" style="left:46px;top:371.4px;width:76px;overflow:hidden;">较强烈反应<span class="nl">(G2)</span></div>
<div class="t n" style="left:124.6px;top:371.8px;">57457</div>
<div class="t n" style="left:161.6px;top:371.8px;">57829</div>
<div class="abs" style="left:45px;top:406.8px;width:151px;height:1px;background:#d4d4d4;"></div>
<div class="rh" style="top:388.4px;height:19.4px;background:#00ff00;"></div>
<div class="t n" style="left:22px;top:390.3px;">12</div>
<div class="t" style="left:46px;top:390.8px;width:76px;overflow:hidden;">低风险</div>
<div class="t n" style="left:124.6px;top:391.2px;">59614</div>
<div class="t n" style="left:161.6px;top:391.2px;">60357</div>
<div class="abs" style="left:45px;top:426.2px;width:151px;height:1px;background:#d4d4d4;"></div>
<div class="rh" style="top:407.8px;height:19.4px;background:#228b22;"></div>
<div class="t n" style="left:22px;top:409.7px;">13</div>
<div class="t" style="left:46px;top:410.2px;width:76px;overflow:hidden;">特别兴奋</div>
<div class="t n" style="left:124.6px;top:410.6px;">60546</div>
<div class="t n" style="left:161.6px;top:410.6px;">60918</div>
<div class="abs" style="left:45px;top:445.6px;width:151px;height:1px;background:#d4d4d4;"></div>
<div class="rh" style="top:427.2px;height:19.4px;background:#ffa500;"></div>
<div class="t n" style="left:22px;top:429.1px;">14</div>
<div class="t" style="left:46px;top:429.6px;width:76px;overflow:hidden;">较强烈反应<span class="nl">(G1)(G2</span></div>
<div class="t n" style="left:124.6px;top:430px;">61955</div>
<div class="t n" style="left:161.6px;top:430px;">62884</div>
<div class="abs" style="left:45px;top:465px;width:151px;height:1px;background:#d4d4d4;"></div>
<div class="rh" style="top:446.6px;height:19.4px;background:#ffa500;"></div>
<div class="t n" style="left:22px;top:448.5px;">15</div>
<div class="t" style="left:46px;top:449px;width:76px;overflow:hidden;">较强烈反应<span class="nl">(G2)</span></div>
<div class="t n" style="left:124.6px;top:449.4px;">63450</div>
<div class="t n" style="left:161.6px;top:449.4px;">64007</div>
<div class="abs" style="left:45px;top:484.4px;width:151px;height:1px;background:#d4d4d4;"></div>
<div class="rh" style="top:466px;height:19.4px;background:#f0e68c;"></div>
<div class="t n" style="left:22px;top:467.9px;">16</div>
<div class="t" style="left:46px;top:468.4px;width:76px;overflow:hidden;">模糊的</div>
<div class="t n" style="left:124.6px;top:468.8px;">64292</div>
<div class="t n" style="left:161.6px;top:468.8px;">64849</div>
<div class="abs" style="left:45px;top:503.8px;width:151px;height:1px;background:#d4d4d4;"></div>
<div class="rh" style="top:485.4px;height:19.4px;background:#ffa500;"></div>
<div class="t n" style="left:22px;top:487.3px;">17</div>
<div class="t" style="left:46px;top:487.8px;width:76px;overflow:hidden;">较强烈反应</div>
<div class="t n" style="left:124.6px;top:488.2px;">67943</div>
<div class="t n" style="left:161.6px;top:488.2px;">68500</div>
<div class="abs" style="left:45px;top:523.2px;width:151px;height:1px;background:#d4d4d4;"></div>
<div class="rh" style="top:504.8px;height:19.4px;background:#ffa500;"></div>
<div class="t n" style="left:22px;top:506.7px;">18</div>
<div class="t" style="left:46px;top:507.2px;width:76px;overflow:hidden;">较强烈反应</div>
<div class="t n" style="left:124.6px;top:507.6px;">69347</div>
<div class="t n" style="left:161.6px;top:507.6px;">69904</div>
<div class="abs" style="left:45px;top:542.6px;width:151px;height:1px;background:#d4d4d4;"></div>
<div class="rh" style="top:524.2px;height:19.4px;background:#ffa500;"></div>
<div class="t n" style="left:22px;top:526.1px;">19</div>
<div class="t" style="left:46px;top:526.6px;width:76px;overflow:hidden;">较强烈反应</div>
<div class="t n" style="left:124.6px;top:527px;">71032</div>
<div class="t n" style="left:161.6px;top:527px;">71589</div>
<div class="abs" style="left:45px;top:562px;width:151px;height:1px;background:#d4d4d4;"></div>
<div class="rh" style="top:543.6px;height:19.4px;background:#808000;"></div>
<div class="t n" style="left:22px;top:545.5px;">20</div>
<div class="t" style="left:46px;top:546px;width:76px;overflow:hidden;">有偏差</div>
<div class="t n" style="left:124.6px;top:546.4px;">72250</div>
<div class="t n" style="left:161.6px;top:546.4px;">72993</div>
<div class="abs" style="left:45px;top:581.4px;width:151px;height:1px;background:#d4d4d4;"></div>
<div class="rh" style="top:563px;height:19.4px;background:#00ff00;"></div>
<div class="t n" style="left:22px;top:564.9px;">21</div>
<div class="abs" style="left:45px;top:563px;width:77px;height:18.8px;background:#3399ff;"></div>
<div class="t" style="left:46px;top:565.4px;width:76px;overflow:hidden;color:#fff;">低风险</div>
<div class="t n" style="left:124.6px;top:565.8px;">73559</div>
<div class="t n" style="left:161.6px;top:565.8px;">74116</div>
<div class="abs" style="left:122px;top:175px;width:1px;height:406.4px;background:#d4d4d4;"></div>
<div class="abs" style="left:158.8px;top:175px;width:1px;height:406.4px;background:#d4d4d4;"></div>
<div class="abs" style="left:195.6px;top:175px;width:1px;height:406.4px;background:#d4d4d4;"></div>
<div class="abs" style="left:200.5px;top:153.3px;width:616px;height:443.5px;background:#f0f0f0;border-left:2px solid #fff;border-top:2px solid #fff;"></div>
<div class="abs" style="left:203.2px;top:155.8px;width:413.6px;height:60.5px;background:#00ff00;"></div>
<div class="abs" style="left:616.8px;top:155.8px;width:198.2px;height:60.7px;background:#000;"></div>
<div class="abs" style="left:323.8px;top:155.8px;height:64.5px;line-height:64.5px;font-family:'Liberation Serif','Noto Serif CJK SC',serif;font-size:37.7px;white-space:nowrap;">低风险</div>
<div class="abs" style="left:457.5px;top:155.8px;height:64px;line-height:64px;font-family:'Liberation Serif','Noto Serif CJK SC',serif;font-size:36.9px;letter-spacing:1.6px;white-space:nowrap;">26</div>
<div class="abs" style="left:203.5px;top:218.8px;width:567px;height:197px;background:#f0f0f0;"></div>
<div class="abs" style="left:206px;top:221.1px;width:556.6px;height:177.8px;background:#000;"></div>
<svg class="abs" style="left:0;top:0" width="1033" height="623" viewBox="0 0 1033 623">
<polyline fill="none" stroke="#00c800" stroke-width="0.9" points="698,214.4 706.5,214.2 711.3,202 714,207 719.5,213.8 734.7,214.4"/>
<line x1="206" y1="256.9" x2="762.6" y2="256.9" stroke="#6e6e6e" stroke-width="0.9"/>
<line x1="206" y1="292.3" x2="762.6" y2="292.3" stroke="#6e6e6e" stroke-width="0.9"/>
<line x1="206" y1="327.6" x2="762.6" y2="327.6" stroke="#6e6e6e" stroke-width="0.9"/>
<line x1="206" y1="363.3" x2="762.6" y2="363.3" stroke="#6e6e6e" stroke-width="0.9"/>
<line x1="345.15" y1="221.1" x2="345.15" y2="398.9" stroke="#6e6e6e" stroke-width="0.9"/>
<line x1="484.3" y1="221.1" x2="484.3" y2="398.9" stroke="#6e6e6e" stroke-width="0.9"/>
<line x1="623.45" y1="221.1" x2="623.45" y2="398.9" stroke="#6e6e6e" stroke-width="0.9"/>
<line x1="206" y1="397.9" x2="206" y2="401.4" stroke="#202020" stroke-width="0.9"/>
<line x1="345.15" y1="397.9" x2="345.15" y2="401.4" stroke="#202020" stroke-width="0.9"/>
<line x1="484.3" y1="397.9" x2="484.3" y2="401.4" stroke="#202020" stroke-width="0.9"/>
<line x1="623.45" y1="397.9" x2="623.45" y2="401.4" stroke="#202020" stroke-width="0.9"/>
<line x1="762.6" y1="397.9" x2="762.6" y2="401.4" stroke="#202020" stroke-width="0.9"/>
<line x1="204" y1="221.5" x2="206" y2="221.5" stroke="#303030" stroke-width="0.9"/>
<line x1="204" y1="256.9" x2="206" y2="256.9" stroke="#303030" stroke-width="0.9"/>
<line x1="204" y1="292.3" x2="206" y2="292.3" stroke="#303030" stroke-width="0.9"/>
<line x1="204" y1="327.6" x2="206" y2="327.6" stroke="#303030" stroke-width="0.9"/>
<line x1="204" y1="363.3" x2="206" y2="363.3" stroke="#303030" stroke-width="0.9"/>
<line x1="204" y1="398.5" x2="206" y2="398.5" stroke="#303030" stroke-width="0.9"/>
<polyline fill="none" stroke="#c8c8c8" stroke-width="1.15" stroke-linejoin="round" points="206,250.72 211.59,256.53 217.19,250.72 222.78,250.33 228.38,244.91 233.97,250.72 239.56,253.05 245.16,249.75 250.75,243.56 256.34,243.56 261.94,250.33 267.53,250.33 273.13,250.33 278.72,249.75 284.31,255.56 289.91,250.33 295.5,253.24 301.1,253.24 306.69,250.33 312.28,249.75 317.88,255.56 323.47,247.82 329.06,256.14 334.66,251.3 340.25,252.08 345.85,252.08 351.44,252.08"/>
<polyline fill="none" stroke="#ffff00" stroke-width="1.15" stroke-linejoin="round" points="206,271.63 211.59,268.15 217.19,271.05 222.78,281.31 228.38,274.92 233.97,285.57 239.56,274.92 245.16,281.12 250.75,281.12 256.34,281.12 261.94,285.18 267.53,285.18 273.13,278.8 278.72,281.12 284.31,277.83 289.91,274.92 295.5,288.48 301.1,282.09 306.69,285.18 312.28,288.48 317.88,288.48 323.47,274.92 329.06,278.21 334.66,264.27 340.25,257.5 345.85,278.8 351.44,272.02"/>
<polyline fill="none" stroke="#00ffff" stroke-width="1.15" stroke-linejoin="round" points="206,316.55 211.59,315.58 217.19,312.29 222.78,317.52 228.38,315.58 233.97,317.52 239.56,312.29 245.16,320.42 250.75,311.71 256.34,311.71 261.94,314.61 267.53,316.55 273.13,320.42 278.72,313.65 284.31,318.87 289.91,315.58 295.5,317.52 301.1,318.1 306.69,316.55 312.28,315.58 317.88,318.49 323.47,317.52 329.06,313.65 334.66,318.87 340.25,315.58 345.85,318.87 351.44,316.94"/>
<polyline fill="none" stroke="#3cb371" stroke-width="1.15" stroke-linejoin="round" points="206,357.5 211.59,358.47 217.19,354.98 222.78,356.14 228.38,351.69 233.97,359.43 239.56,361.37 245.16,342.98 250.75,349.75 256.34,349.75 261.94,357.5 267.53,359.43 273.13,353.63 278.72,347.82 284.31,336.78 289.91,354.98 295.5,359.43 301.1,360.02 306.69,358.47 312.28,345.88 317.88,356.92 323.47,350.72 329.06,353.24 334.66,353.63 340.25,353.24 345.85,350.72 351.44,354.98"/>
<polyline fill="none" stroke="#ffd700" stroke-width="1.15" stroke-linejoin="round" points="206,387.9 211.59,385.96 217.19,387.9 222.78,385.18 228.38,388.86 233.97,388.86 239.56,385.18 245.16,384.02 250.75,384.8 256.34,384.8 261.94,369.5 267.53,375.89 273.13,386.54 278.72,378.8 284.31,387.51 289.91,377.83 295.5,353.63 301.1,382.09 306.69,382.09 312.28,374.92 317.88,372.02 323.47,385.57 329.06,383.64 334.66,388.48 340.25,388.48 345.85,381.12 351.44,383.25"/>
</svg>
<div class="t n" style="left:205.5px;top:403.9px;">0</div>
<div class="t nc" style="left:335.15px;width:20px;text-align:center;top:403.9px;">25</div>
<div class="t nc" style="left:474.3px;width:20px;text-align:center;top:403.9px;">50</div>
<div class="t nc" style="left:613.45px;width:20px;text-align:center;top:403.9px;">75</div>
<div class="t nr" style="left:749.1px;width:20px;text-align:right;top:403.9px;">100</div>
<div class="abs" style="left:772.6px;top:218.8px;width:42.6px;height:195.4px;background:#f0f0f0;border:1px solid #a0a0a0;border-right-color:#b8b8b8;border-bottom-color:#b0b0b0;box-shadow:inset 1px 1px 0 #fff;"></div>
<div class="lg" style="top:238.1px;background:#c0c0c0;">想象</div>
<div class="lg" style="top:272.4px;background:#ffff00;">冲突</div>
<div class="lg" style="top:306.9px;background:#00ffff;">犹豫</div>
<div class="lg" style="top:343px;background:#3cb371;">期待</div>
<div class="lg" style="top:376.9px;background:#ffd700;">排斥</div>
<div class="abs" style="left:203.5px;top:415.4px;width:612px;height:181px;background:#fff;border-top:1px solid #d6d6d6;"></div>
<svg class="abs" style="left:0;top:0" width="1033" height="623" viewBox="0 0 1033 623">
<line x1="242.5" y1="589.5" x2="797.9" y2="589.5" stroke="#b8b8b8" stroke-width="1.1"/>
<line x1="244" y1="589.5" x2="797.9" y2="589.5" stroke="#333" stroke-width="1" stroke-dasharray="3 1.6"/>
<line x1="239.5" y1="589.5" x2="242.5" y2="589.5" stroke="#555" stroke-width="0.9"/>
<line x1="245" y1="572.87" x2="797.9" y2="572.87" stroke="#888" stroke-width="0.9" stroke-dasharray="2.3 2.3"/>
<line x1="239.5" y1="572.87" x2="242.5" y2="572.87" stroke="#555" stroke-width="0.9"/>
<line x1="245" y1="556.24" x2="797.9" y2="556.24" stroke="#888" stroke-width="0.9" stroke-dasharray="2.3 2.3"/>
<line x1="239.5" y1="556.24" x2="242.5" y2="556.24" stroke="#555" stroke-width="0.9"/>
<line x1="245" y1="539.61" x2="797.9" y2="539.61" stroke="#888" stroke-width="0.9" stroke-dasharray="2.3 2.3"/>
<line x1="239.5" y1="539.61" x2="242.5" y2="539.61" stroke="#555" stroke-width="0.9"/>
<line x1="245" y1="522.98" x2="797.9" y2="522.98" stroke="#888" stroke-width="0.9" stroke-dasharray="2.3 2.3"/>
<line x1="239.5" y1="522.98" x2="242.5" y2="522.98" stroke="#555" stroke-width="0.9"/>
<line x1="245" y1="506.35" x2="797.9" y2="506.35" stroke="#888" stroke-width="0.9" stroke-dasharray="2.3 2.3"/>
<line x1="239.5" y1="506.35" x2="242.5" y2="506.35" stroke="#555" stroke-width="0.9"/>
<line x1="245" y1="489.72" x2="797.9" y2="489.72" stroke="#888" stroke-width="0.9" stroke-dasharray="2.3 2.3"/>
<line x1="239.5" y1="489.72" x2="242.5" y2="489.72" stroke="#555" stroke-width="0.9"/>
<line x1="245" y1="473.09" x2="797.9" y2="473.09" stroke="#888" stroke-width="0.9" stroke-dasharray="2.3 2.3"/>
<line x1="239.5" y1="473.09" x2="242.5" y2="473.09" stroke="#555" stroke-width="0.9"/>
<line x1="245" y1="456.46" x2="797.9" y2="456.46" stroke="#888" stroke-width="0.9" stroke-dasharray="2.3 2.3"/>
<line x1="239.5" y1="456.46" x2="242.5" y2="456.46" stroke="#555" stroke-width="0.9"/>
<line x1="245" y1="439.83" x2="797.9" y2="439.83" stroke="#888" stroke-width="0.9" stroke-dasharray="2.3 2.3"/>
<line x1="239.5" y1="439.83" x2="242.5" y2="439.83" stroke="#555" stroke-width="0.9"/>
<line x1="242.5" y1="423.2" x2="797.9" y2="423.2" stroke="#b8b8b8" stroke-width="1.1"/>
<line x1="244" y1="423.2" x2="797.9" y2="423.2" stroke="#333" stroke-width="1.3" stroke-dasharray="3 1.6"/>
<line x1="239.5" y1="423.2" x2="242.5" y2="423.2" stroke="#555" stroke-width="0.9"/>
<line x1="797.9" y1="423.2" x2="797.9" y2="589.5" stroke="#2a2a2a" stroke-width="1"/>
<line x1="242.5" y1="422.9" x2="242.5" y2="589.8" stroke="#000" stroke-width="1.5"/>
<rect x="255" y="566.1" width="24" height="22.4" fill="#00ff00"/>
<rect x="291.1" y="588.9" width="24" height="1.2" fill="#ffe4b5"/>
<rect x="327.2" y="588.9" width="24" height="1.2" fill="#ffa07a"/>
<rect x="363.3" y="572" width="24" height="16.5" fill="#90ee90"/>
<rect x="399.4" y="580.88" width="24" height="7.62" fill="#f0e68c"/>
<rect x="435.5" y="588.9" width="24" height="1.2" fill="#cd5c5c"/>
<rect x="471.6" y="572" width="24" height="16.5" fill="#228b22"/>
<rect x="507.7" y="588.9" width="24" height="1.2" fill="#ffff00"/>
<rect x="543.8" y="588.9" width="24" height="1.2" fill="#dda0dd"/>
<rect x="579.9" y="588.9" width="24" height="1.2" fill="#da70d6"/>
<rect x="616" y="588.9" width="24" height="1.2" fill="#a0522d"/>
<rect x="652.1" y="588.9" width="24" height="1.2" fill="#00ffff"/>
<rect x="688.2" y="549.2" width="24" height="39.3" fill="#808000"/>
<rect x="724.3" y="525.45" width="24" height="63.05" fill="#ffa500"/>
<rect x="760.4" y="588.9" width="24" height="1.2" fill="#ffff80"/>
</svg>
<div class="t nr" style="left:217.6px;width:20px;text-align:right;top:585px;">0</div>
<div class="t nr" style="left:217.6px;width:20px;text-align:right;top:568.37px;">10</div>
<div class="t nr" style="left:217.6px;width:20px;text-align:right;top:551.74px;">20</div>
<div class="t nr" style="left:217.6px;width:20px;text-align:right;top:535.11px;">30</div>
<div class="t nr" style="left:217.6px;width:20px;text-align:right;top:518.48px;">40</div>
<div class="t nr" style="left:217.6px;width:20px;text-align:right;top:501.85px;">50</div>
<div class="t nr" style="left:217.6px;width:20px;text-align:right;top:485.22px;">60</div>
<div class="t nr" style="left:217.6px;width:20px;text-align:right;top:468.59px;">70</div>
<div class="t nr" style="left:217.6px;width:20px;text-align:right;top:451.96px;">80</div>
<div class="t nr" style="left:217.6px;width:20px;text-align:right;top:435.33px;">90</div>
<div class="t nr" style="left:217.6px;width:20px;text-align:right;top:418.7px;">100</div>
<div class="t" style="left:211px;top:499.5px;font-size:11.5px;line-height:12px;">%</div>
<div class="t" style="left:247px;width:40px;text-align:center;top:550.5px;"><span class="ns">3</span>个</div>
<div class="t" style="left:283.1px;width:40px;text-align:center;top:573.8px;"><span class="ns">0</span>个</div>
<div class="t" style="left:319.2px;width:40px;text-align:center;top:573.8px;"><span class="ns">0</span>个</div>
<div class="t" style="left:355.3px;width:40px;text-align:center;top:556.4px;"><span class="ns">2</span>个</div>
<div class="t" style="left:391.4px;width:40px;text-align:center;top:565.28px;"><span class="ns">1</span>个</div>
<div class="t" style="left:427.5px;width:40px;text-align:center;top:573.8px;"><span class="ns">0</span>个</div>
<div class="t" style="left:463.6px;width:40px;text-align:center;top:556.4px;"><span class="ns">2</span>个</div>
<div class="t" style="left:499.7px;width:40px;text-align:center;top:573.8px;"><span class="ns">0</span>个</div>
<div class="t" style="left:535.8px;width:40px;text-align:center;top:573.8px;"><span class="ns">0</span>个</div>
<div class="t" style="left:571.9px;width:40px;text-align:center;top:573.8px;"><span class="ns">0</span>个</div>
<div class="t" style="left:608px;width:40px;text-align:center;top:573.8px;"><span class="ns">0</span>个</div>
<div class="t" style="left:644.1px;width:40px;text-align:center;top:573.8px;"><span class="ns">0</span>个</div>
<div class="t" style="left:680.2px;width:40px;text-align:center;top:533.6px;"><span class="ns">5</span>个</div>
<div class="t" style="left:716.3px;width:40px;text-align:center;top:509.85px;"><span class="ns">8</span>个</div>
<div class="t" style="left:752.4px;width:40px;text-align:center;top:573.8px;"><span class="ns">0</span>个</div>
<div class="abs" style="left:815.4px;top:153.3px;width:2px;height:443.5px;background:#9c9c9c;"></div>
<div class="abs" style="left:817.4px;top:153.3px;width:3.2px;height:443.5px;background:#fff;"></div>
<div class="abs" style="left:820.4px;top:154.6px;width:179px;height:442px;background:#f4f4f4;border:1px solid #b8b8b8;border-right:1.2px solid #7c7c84;"></div>
<div class="abs" style="left:845px;top:172.9px;width:62.6px;height:14.6px;background:#fff;border:1px solid #ececec;"></div>
<div class="t" style="left:846.6px;top:175.9px;">测试名称:</div>
<div class="btn" style="left:845.4px;top:198px;width:130.8px;height:14.4px;line-height:12.4px;background:linear-gradient(to right,#ececec 0%,#dedede 6%,#e6e6e6 14%,#fafafa 24%,#fafafa 30.4%,#dedede 30.5%,#ececec 50%,#fbfbfb 80%,#fbfbfb 86.4%,#dadada 86.5%,#e8e8e8 97%,#f2f2f2 100%);border:1.2px solid #8e8e8e;border-bottom-color:#7a7a7a;">测试案件</div>
<div class="abs" style="left:882.6px;top:222.6px;width:50.2px;height:14.6px;border:1px solid #8a8a8a;border-radius:2px;background:linear-gradient(to right,#f6f6f6 0%,#fbfbfb 40%,#e9e9e9 62%,#dedede 76%);"></div>
<div class="t" style="left:886.5px;top:224.6px;font-size:10.5px;">男</div>
<div class="abs" style="left:921.4px;top:224.2px;width:9.8px;height:11.4px;border:1px solid #a8a8a8;border-radius:1.5px;background:linear-gradient(#f2f2f2,#d4d4d4);"></div>
<svg class="abs" style="left:921.4px;top:224.2px" width="10" height="12" viewBox="0 0 10 12"><path d="M3 5 L7 5 L5 7.6 Z" fill="#404040"/></svg>
<div class="btn" style="top:253.5px;">停止</div>
<div class="btn" style="top:284.5px;border-color:#3b7db0;background:linear-gradient(#e3f4fd 0%,#c4e8fb 45%,#86c9f1 55%,#a9dcf7 100%);">不分析</div>
<div class="btn" style="top:315.7px;">标记</div>
<div class="btn" style="top:346.5px;">重新初始</div>
<div class="btn" style="top:377.8px;border-color:#adb2b5;background:#f4f4f4;color:#9a9a9a;box-shadow:none;">播放</div>
<div class="btn" style="top:464.5px;">录音设置</div>
<div class="btn" style="top:495.5px;">音频设置</div>
<div class="abs" style="left:885.4px;top:411.2px;width:10px;height:10px;border:1px solid #8e8f8f;background:linear-gradient(135deg,#dcdcdc,#fff);box-shadow:inset 0 0 0 1px #f4f4f4;"></div>
<svg class="abs" style="left:885.4px;top:411.2px" width="10" height="10" viewBox="0 0 10 10"><path d="M2.4 4.8 L4.2 7.4 L7.6 2.4" fill="none" stroke="#2a3fa8" stroke-width="1.5"/></svg>
<div class="t" style="left:897.8px;top:410.8px;">记录</div>
<div class="abs" style="left:882.6px;top:433.6px;width:50.2px;height:14px;background:#fff;"></div>
<div class="t" style="left:882.6px;width:50.2px;text-align:center;top:436.4px;"><span class="ns">73</span>秒</div>
</div></body></html>
